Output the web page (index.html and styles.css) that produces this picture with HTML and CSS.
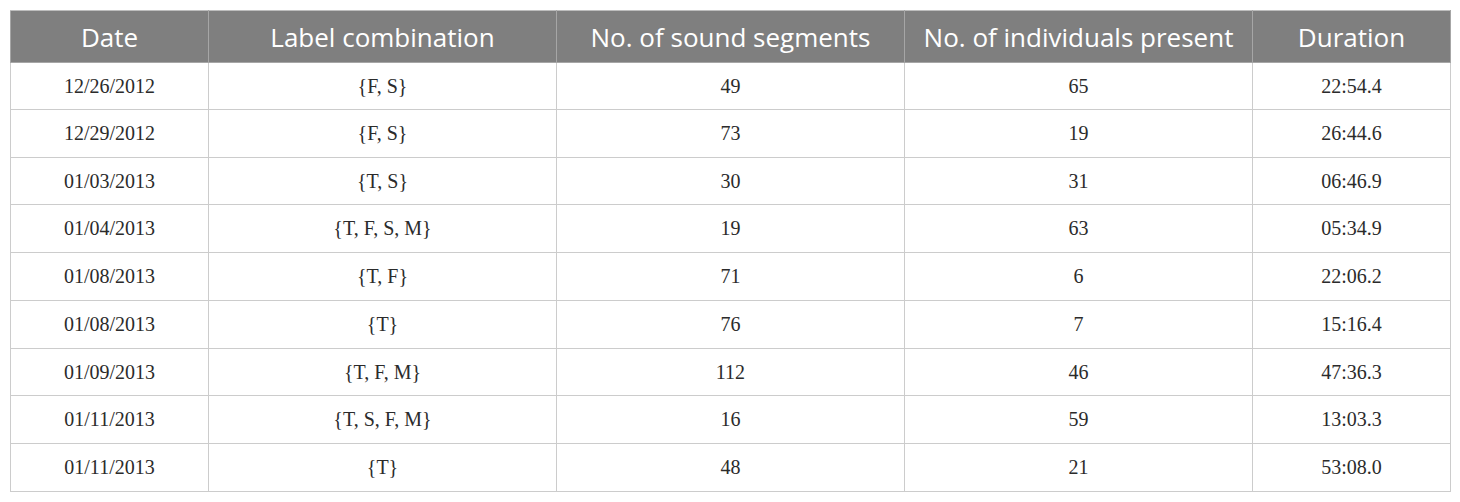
FILE: index.html
```html
<!DOCTYPE html>
<html>
<head>
<meta charset="utf-8">
<link rel="stylesheet" href="styles.css">
</head>
<body>
<div class="wrap">
<table class="data">
<colgroup>
<col class="c-narrow"><col class="c-wide"><col class="c-wide"><col class="c-wide"><col class="c-narrow">
</colgroup>
<thead>
<tr><th>Date</th><th>Label combination</th><th>No. of sound segments</th><th>No. of individuals present</th><th>Duration</th></tr>
</thead>
<tbody>
<tr class="r-short"><td>12/26/2012</td><td>{F, S}</td><td>49</td><td>65</td><td>22:54.4</td></tr>
<tr><td>12/29/2012</td><td>{F, S}</td><td>73</td><td>19</td><td>26:44.6</td></tr>
<tr class="r-short"><td>01/03/2013</td><td>{T, S}</td><td>30</td><td>31</td><td>06:46.9</td></tr>
<tr><td>01/04/2013</td><td>{T, F, S, M}</td><td>19</td><td>63</td><td>05:34.9</td></tr>
<tr><td>01/08/2013</td><td>{T, F}</td><td>71</td><td>6</td><td>22:06.2</td></tr>
<tr><td>01/08/2013</td><td>{T}</td><td>76</td><td>7</td><td>15:16.4</td></tr>
<tr class="r-short"><td>01/09/2013</td><td>{T, F, M}</td><td>112</td><td>46</td><td>47:36.3</td></tr>
<tr><td>01/11/2013</td><td>{T, S, F, M}</td><td>16</td><td>59</td><td>13:03.3</td></tr>
<tr><td>01/11/2013</td><td>{T}</td><td>48</td><td>21</td><td>53:08.0</td></tr>
</tbody>
</table>
</div>
</body>
</html>
```
FILE: styles.css
```css
html, body {
  margin: 0;
  padding: 0;
  background: #ffffff;
}
.wrap {
  padding: 10px 10px 0 10px;
}
.data {
  width: 1440px;
  table-layout: fixed;
  border-collapse: collapse;
}
.c-narrow { width: 198px; }
.c-wide { width: 348px; }
.data th {
  background: #7f7f7f;
  color: #ffffff;
  font-family: "Open Sans", "Noto Sans", sans-serif;
  font-weight: 400;
  font-size: 26px;
  height: 51px;
  padding: 0;
  text-align: center;
  vertical-align: middle;
  border: 1px solid #a6a6a6;
  border-top-color: #bdbdbd;
}
.data td {
  font-family: "Liberation Serif", "Times New Roman", serif;
  font-size: 20px;
  color: #2b2b2b;
  height: 47px;
  padding: 0;
  text-align: center;
  vertical-align: middle;
  border: 1px solid #cccccc;
}
.data tr.r-short td { height: 46px; }
```
